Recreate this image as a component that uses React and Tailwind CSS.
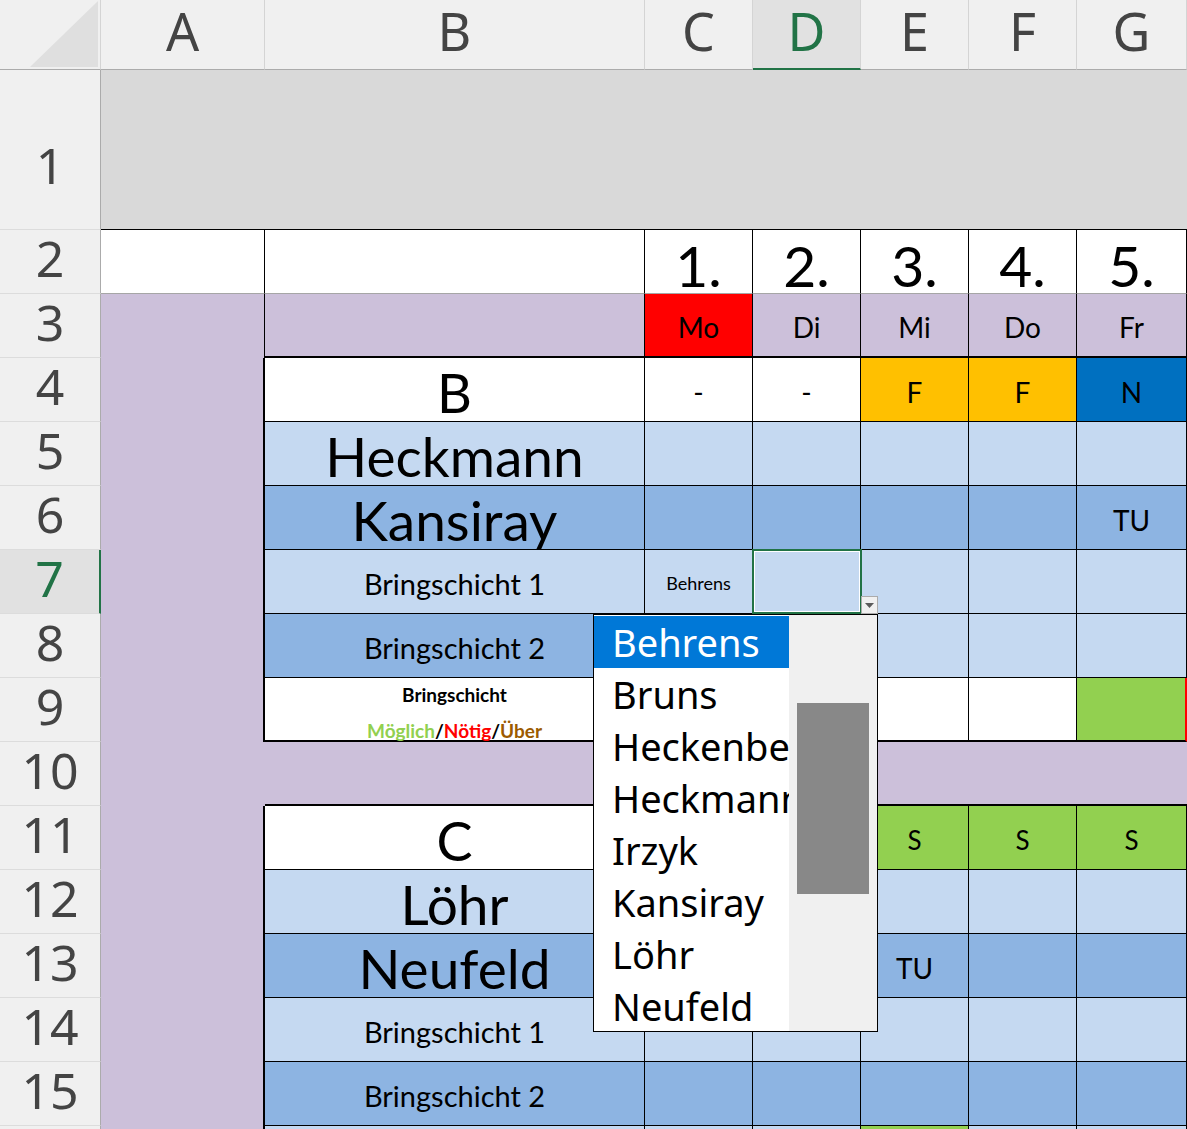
import React from 'react';

const purple = 'bg-[#ccc0da]';
const light = 'bg-[#c5d9f1]';
const dark = 'bg-[#8db4e2]';
const green = 'bg-[#92d050]';

const names = ['Behrens', 'Bruns', 'Heckenberg', 'Heckmann', 'Irzyk', 'Kansiray', 'Löhr', 'Neufeld'];

const RowHead = ({ n, active, tall }) => (
  <div
    className={`w-[101px] shrink-0 flex justify-center border-b border-[#dcdcdc] text-[50px] leading-none ${
      tall ? 'items-center pt-[30px]' : 'items-center pb-[8px]'
    } ${active ? 'bg-[#e1e1e1] text-[#217346] border-r-2 border-r-[#217346]' : 'bg-[#f0f0f0] text-[#444444] border-r border-r-[#ababab]'}`}
    style={{ fontFamily: '"Noto Sans", "Open Sans", sans-serif' }}
  >
    {n}
  </div>
);

const Cell = ({ w, className = '', children }) => (
  <div className={`${w} shrink-0 flex items-center justify-center leading-none ${className}`}>{children}</div>
);

const ColHead = ({ w, label, active }) => (
  <div
    className={`${w} shrink-0 flex items-start justify-center text-[52px] leading-[62px] border-r border-r-[#d4d4d4] ${
      active ? 'bg-[#e1e1e1] text-[#217346] border-b-2 border-b-[#217346]' : 'bg-[#f0f0f0] text-[#444444] border-b border-b-[#ababab]'
    }`}
  >
    <span>{label}</span>
  </div>
);

// one body row (cols A..G), A column purple
const Row = ({ n, active, aBorder = 'border-r-2 border-black', children }) => (
  <div className="flex h-[64px]">
    <RowHead n={n} active={active} />
    <Cell w="w-[164px]" className={`${purple} ${aBorder}`} />
    {children}
  </div>
);

const Std = ({ w, bg, b = 'border-b', r = 'border-r', className = '', children }) => (
  <Cell w={w} className={`${bg} ${b} ${r} border-black ${className}`}>
    {children}
  </Cell>
);

const BW = 'w-[380px]';
const CW = 'w-[108px]';
const GW = 'w-[110px]';

const DayRow = ({ n, bgs, texts = [], bottom = 'border-b', bLabel, bClass, bBg, textSize = 'text-[28px]' }) => (
  <Row n={n}>
    <Std w={BW} bg={bBg} b={bottom} className={bClass}>
      {bLabel}
    </Std>
    {bgs.map((bg, i) => (
      <Std key={i} w={i === 4 ? GW : CW} bg={bg} b={bottom} className={`${textSize} pt-[4px]`}>
        {texts[i]}
      </Std>
    ))}
  </Row>
);

export default function App() {
  return (
    <div
      className="relative w-[1187px] h-[1129px] overflow-hidden bg-white text-black"
      style={{ fontFamily: 'Lato, "Noto Sans", sans-serif' }}
    >
      {/* column headers */}
      <div className="flex h-[70px]" style={{ fontFamily: '"Noto Sans", "Open Sans", sans-serif' }}>
        <div className="w-[101px] shrink-0 bg-[#f0f0f0] border-b border-b-[#ababab] border-r border-r-[#d4d4d4] relative">
          <svg className="absolute left-0 top-0" width="101" height="70" viewBox="0 0 101 70">
            <polygon points="30,67 98,67 98,1" fill="#dfdfdf" />
          </svg>
        </div>
        <ColHead w="w-[164px]" label="A" />
        <ColHead w="w-[380px]" label="B" />
        <ColHead w="w-[108px]" label="C" />
        <ColHead w="w-[108px]" label="D" active />
        <ColHead w="w-[108px]" label="E" />
        <ColHead w="w-[108px]" label="F" />
        <ColHead w="w-[110px]" label="G" />
      </div>

      {/* row 1 */}
      <div className="flex h-[160px]">
        <RowHead n="1" tall />
        <div className="flex-1 bg-[#d9d9d9] border-b border-black" />
      </div>

      {/* row 2 */}
      <div className="flex h-[64px]">
        <RowHead n="2" />
        <Cell w="w-[164px]" className="bg-white border-r border-black border-b border-b-[#a6a6a6]" />
        <Cell w={BW} className="bg-white border-r border-black border-b border-b-[#a6a6a6]" />
        {['1.', '2.', '3.', '4.', '5.'].map((t, i) => (
          <Cell
            key={t}
            w={i === 4 ? GW : CW}
            className="bg-white border-r border-black border-b border-b-[#a6a6a6] text-[57px] pt-[8px]"
          >
            {t}
          </Cell>
        ))}
      </div>

      {/* row 3 */}
      <Row n="3" aBorder="border-r border-black">
        <Std w={BW} bg={purple} b="border-b-2" />
        {['Mo', 'Di', 'Mi', 'Do', 'Fr'].map((t, i) => (
          <Std key={t} w={i === 4 ? GW : CW} bg={i === 0 ? 'bg-[#ff0000]' : purple} b="border-b-2" className="text-[28px] pt-[4px]">
            {t}
          </Std>
        ))}
      </Row>

      <DayRow
        n="4"
        bBg="bg-white"
        bLabel="B"
        bClass="text-[54px] pt-[6px]"
        bgs={['bg-white', 'bg-white', 'bg-[#ffc000]', 'bg-[#ffc000]', 'bg-[#0070c0]']}
        texts={['-', '-', 'F', 'F', 'N']}
      />
      <DayRow n="5" bBg={light} bLabel="Heckmann" bClass="text-[55px] pt-[6px]" bgs={[light, light, light, light, light]} />
      <DayRow
        n="6"
        bBg={dark}
        bLabel="Kansiray"
        bClass="text-[55px] pt-[6px]"
        bgs={[dark, dark, dark, dark, dark]}
        texts={['', '', '', '', 'TU']}
      />

      {/* row 7 with selected cell */}
      <Row n="7" active>
        <Std w={BW} bg={light} className="text-[29px] pt-[4px]">
          Bringschicht 1
        </Std>
        <Std w={CW} bg={light} className="text-[18px] pt-[2px]">
          Behrens
        </Std>
        <Std w={CW} bg={light} className="relative">
          <div className="absolute -left-[1px] -top-[1px] w-[110px] h-[65px] border-2 border-[#217346]">
            <div className="w-full h-full border border-white" />
          </div>
        </Std>
        <Std w={CW} bg={light} />
        <Std w={CW} bg={light} />
        <Std w={GW} bg={light} />
      </Row>

      <DayRow n="8" bBg={dark} bLabel="Bringschicht 2" bClass="text-[29px] pt-[4px]" bgs={[light, light, light, light, light]} />

      {/* row 9 */}
      <Row n="9">
        <div className={`${BW} shrink-0 bg-white border-b-2 border-r border-black flex flex-col items-center gap-[17px] pt-[7px] font-bold text-[19px] leading-none`}>
          <span>Bringschicht</span>
          <span>
            <span className="text-[#92d050]">Möglich</span>/<span className="text-[#ff0000]">Nötig</span>/
            <span className="text-[#9c5a00]">Über</span>
          </span>
        </div>
        <Std w={CW} bg="bg-white" b="border-b-2" />
        <Std w={CW} bg="bg-white" b="border-b-2" />
        <Std w={CW} bg="bg-white" b="border-b-2" />
        <Std w={CW} bg="bg-white" b="border-b-2" />
        <Cell w={GW} className={`${green} border-b-2 border-b-black border-r-2 border-r-[#ff0000]`} />
      </Row>

      {/* row 10 */}
      <div className="flex h-[64px]">
        <RowHead n="10" />
        <Cell w="w-[164px]" className={purple} />
        <div className={`flex-1 ${purple} border-b-2 border-black`} />
      </div>

      <DayRow
        n="11"
        bBg="bg-white"
        bLabel="C"
        bClass="text-[54px] pt-[6px]"
        bgs={[green, green, green, green, green]}
        texts={['', '', 'S', 'S', 'S']}
        textSize="text-[26px]"
      />
      <DayRow n="12" bBg={light} bLabel="Löhr" bClass="text-[55px] pt-[6px]" bgs={[light, light, light, light, light]} />
      <DayRow
        n="13"
        bBg={dark}
        bLabel="Neufeld"
        bClass="text-[55px] pt-[6px]"
        bgs={[dark, dark, dark, dark, dark]}
        texts={['', '', 'TU', '', '']}
      />
      <DayRow n="14" bBg={light} bLabel="Bringschicht 1" bClass="text-[29px] pt-[4px]" bgs={[light, light, light, light, light]} />
      <DayRow n="15" bBg={dark} bLabel="Bringschicht 2" bClass="text-[29px] pt-[4px]" bgs={[dark, dark, dark, dark, dark]} />
      <DayRow n="" bBg={light} bgs={[light, light, green, light, light]} />

      {/* dropdown arrow button */}
      <div className="absolute left-[861px] top-[596px] w-[17px] h-[18px] bg-[#f0f0f0] border border-[#ababab] flex items-center justify-center">
        <svg width="9" height="5" viewBox="0 0 9 5">
          <polygon points="0,0 9,0 4.5,5" fill="#5a5a5a" />
        </svg>
      </div>

      {/* validation list */}
      <div
        className="absolute left-[593px] top-[614px] w-[285px] h-[418px] bg-white border border-black flex"
        style={{ fontFamily: '"Noto Sans", "Open Sans", sans-serif' }}
      >
        <div className="w-[195px] overflow-hidden pt-[1px]">
          {names.map((n, i) => (
            <div
              key={n}
              className={`h-[52px] pl-[18px] flex items-center whitespace-nowrap text-[38px] leading-none ${
                i === 0 ? 'bg-[#0078d7] text-white' : 'text-black'
              }`}
            >
              {n}
            </div>
          ))}
        </div>
        <div className="flex-1 bg-[#f0f0f0] px-[8px] pt-[88px]">
          <div className="w-full h-[191px] bg-[#888888]" />
        </div>
      </div>
    </div>
  );
}
